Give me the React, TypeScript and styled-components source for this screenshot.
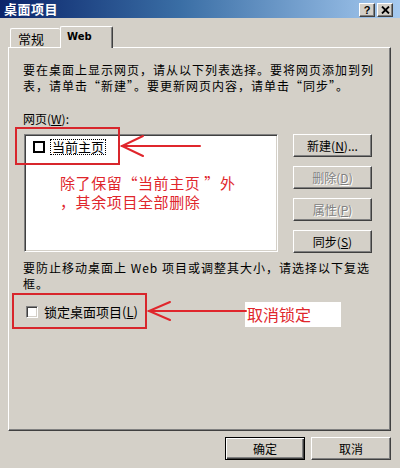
import React from "react";
import styled, { createGlobalStyle, css } from "styled-components";

const GlobalStyle = createGlobalStyle`
  html, body { margin: 0; padding: 0; background: #d4d0c8; }
  body { font-family: "Noto Sans CJK SC", "Liberation Sans", sans-serif; }
  * { box-sizing: border-box; }
`;

const FONT = `"Noto Sans CJK SC", "Liberation Sans", sans-serif`;
const RED = "#e0262c";

const Window = styled.div`
  position: relative;
  width: 400px;
  height: 468px;
  background: #d4d0c8;
  overflow: hidden;
  font-family: ${FONT};
  color: #000;
`;

const TitleBar = styled.div`
  height: 18px;
  display: flex;
  align-items: center;
  justify-content: space-between;
  padding: 0 7px 0 4px;
  background: linear-gradient(to right, #0a246a 0%, #3a6ea5 45%, #a6caf0 100%);
`;

const Title = styled.div`
  color: #fff;
  font-weight: 700;
  font-size: 13px;
  line-height: 14px;
  letter-spacing: 0.5px;
`;

const TitleButtons = styled.div`
  display: flex;
  gap: 2px;
  padding-top: 2px;
`;

const TitleBtn = styled.div`
  width: 16px;
  height: 14px;
  background: #d4d0c8;
  border: 1px solid;
  border-color: #fff #404040 #404040 #fff;
  box-shadow: inset -1px -1px #808080;
  display: flex;
  align-items: center;
  justify-content: center;
  font-family: "Liberation Sans", sans-serif;
  font-weight: 700;
  font-size: 11px;
  line-height: 10px;
`;

const Body = styled.div`
  padding: 8px 9px 0 8px;
  display: flex;
  flex-direction: column;
`;

const TabStrip = styled.div`
  height: 21px;
  display: flex;
  align-items: flex-end;
  padding-left: 2px;
`;

const Tab = styled.div<{ $active?: boolean }>`
  position: relative;
  background: #d4d0c8;
  border: 1px solid;
  border-bottom: none;
  border-color: #fff #404040 #404040 #fff;
  border-radius: 2px 2px 0 0;
  box-shadow: inset -1px 0 #808080;
  display: flex;
  align-items: center;
  font-size: 13px;
  ${(p) =>
    p.$active
      ? css`
          width: 53px;
          height: 22px;
          margin-bottom: -1px;
          z-index: 2;
          padding: 0 0 2px 6px;
          font-family: "DejaVu Sans", sans-serif;
          font-size: 10px;
          font-weight: 700;
        `
      : css`
          width: 50px;
          height: 19px;
          padding-left: 7px;
          border-right: none;
          box-shadow: none;
        `}
`;

const TabPanel = styled.div`
  position: relative;
  z-index: 1;
  height: 384px;
  border: 1px solid;
  border-color: #fff #404040 #404040 #fff;
  box-shadow: inset -1px -1px #808080;
  padding: 14px 0 0 14px;
  display: flex;
  flex-direction: column;
`;

const Para = styled.div<{ $mt?: number }>`
  margin-top: ${(p) => p.$mt ?? 0}px;
  display: flex;
  flex-direction: column;
`;

const Line = styled.div`
  height: 16px;
  font-size: 12px;
  letter-spacing: 1px;
  line-height: 16px;
  white-space: nowrap;
`;

const FieldLabel = styled.div`
  margin-top: 18px;
  font-size: 12px;
  line-height: 14px;
`;

const ListRow = styled.div`
  margin-top: 8px;
  display: flex;
  gap: 15px;
  padding-left: 1px;
`;

const ListBox = styled.div`
  width: 254px;
  height: 118px;
  background: #fff;
  border: 1px solid;
  border-color: #808080 #fff #fff #808080;
  box-shadow: inset 1px 1px #404040, inset -1px -1px #d4d0c8;
  padding: 4px 0 0 8px;
`;

const ListItem = styled.div`
  display: flex;
  align-items: center;
  gap: 5px;
`;

const BoldCheck = styled.div`
  width: 12px;
  height: 12px;
  border: 2px solid #000;
  background: #fff;
`;

const FocusText = styled.div`
  border: 1px dotted #000;
  padding: 0 1px;
  font-size: 13px;
  line-height: 14px;
`;

const ButtonCol = styled.div`
  display: flex;
  flex-direction: column;
  gap: 9px;
`;

const Button = styled.div<{ $disabled?: boolean; $default?: boolean; $w?: number }>`
  width: ${(p) => p.$w ?? 79}px;
  height: 23px;
  border: 1px solid;
  border-color: #fff #404040 #404040 #fff;
  box-shadow: inset -1px -1px #808080;
  background: #d4d0c8;
  display: flex;
  align-items: center;
  justify-content: center;
  font-size: 12px;
  line-height: 14px;
  color: ${(p) => (p.$disabled ? "#808080" : "#000")};
  text-shadow: ${(p) => (p.$disabled ? "1px 1px #fff" : "none")};
  ${(p) =>
    p.$default &&
    css`
      border: 1px solid #000;
      box-shadow: inset 1px 1px #fff, inset -1px -1px #404040, inset -2px -2px #808080;
    `}
`;

const U = styled.span`
  text-decoration: underline;
`;

const CheckRow = styled.div`
  margin-top: 12px;
  display: flex;
  align-items: center;
  gap: 6px;
  padding-left: 3px;
  font-size: 13px;
  line-height: 16px;
`;

const SunkenCheck = styled.div`
  width: 12px;
  height: 12px;
  background: #fff;
  border: 1px solid;
  border-color: #808080 #fff #fff #808080;
  box-shadow: inset 1px 1px #404040, inset -1px -1px #d4d0c8;
`;

const Footer = styled.div`
  margin-top: 6px;
  display: flex;
  justify-content: flex-end;
  gap: 6px;
`;

/* annotation overlay */
const RedBox = styled.div<{ $x: number; $y: number; $w: number; $h: number }>`
  position: absolute;
  left: ${(p) => p.$x}px;
  top: ${(p) => p.$y}px;
  width: ${(p) => p.$w}px;
  height: ${(p) => p.$h}px;
  border: 2px solid #d8262c;
  z-index: 5;
  pointer-events: none;
`;

const Note = styled.div<{ $x: number; $y: number }>`
  position: absolute;
  left: ${(p) => p.$x}px;
  top: ${(p) => p.$y}px;
  color: ${RED};
  font-size: 15px;
  letter-spacing: 0.6px;
  line-height: 18px;
  white-space: nowrap;
  z-index: 5;
`;

const NoteLabel = styled.div`
  position: absolute;
  left: 245px;
  top: 302px;
  width: 96px;
  height: 25px;
  background: #fff;
  color: ${RED};
  font-size: 16px;
  line-height: 25px;
  padding-left: 2px;
  z-index: 5;
`;

const ArrowLayer = styled.svg`
  position: absolute;
  left: 0;
  top: 0;
  z-index: 6;
  pointer-events: none;
`;

export default function App() {
  return (
    <>
      <GlobalStyle />
      <Window>
        <TitleBar>
          <Title>桌面项目</Title>
          <TitleButtons>
            <TitleBtn>?</TitleBtn>
            <TitleBtn>
              <svg width="9" height="8" viewBox="0 0 9 8">
                <path d="M1 0.5 L8 7.5 M8 0.5 L1 7.5" stroke="#000" strokeWidth="1.8" />
              </svg>
            </TitleBtn>
          </TitleButtons>
        </TitleBar>
        <Body>
          <TabStrip>
            <Tab>常规</Tab>
            <Tab $active>Web</Tab>
          </TabStrip>
          <TabPanel>
            <Para>
              <Line>要在桌面上显示网页，请从以下列表选择。要将网页添加到列</Line>
              <Line>表，请单击“新建”。要更新网页内容，请单击“同步”。</Line>
            </Para>
            <FieldLabel>
              网页(<U>W</U>):
            </FieldLabel>
            <ListRow>
              <ListBox>
                <ListItem>
                  <BoldCheck />
                  <FocusText>当前主页</FocusText>
                </ListItem>
              </ListBox>
              <ButtonCol>
                <Button>
                  新建(<U>N</U>)...
                </Button>
                <Button $disabled>
                  删除(<U>D</U>)
                </Button>
                <Button $disabled>
                  属性(<U>P</U>)
                </Button>
                <Button>
                  同步(<U>S</U>)
                </Button>
              </ButtonCol>
            </ListRow>
            <Para $mt={7}>
              <Line>要防止移动桌面上 Web 项目或调整其大小，请选择以下复选</Line>
              <Line>框。</Line>
            </Para>
            <CheckRow>
              <SunkenCheck />
              <span>
                锁定桌面项目(<U>L</U>)
              </span>
            </CheckRow>
          </TabPanel>
          <Footer>
            <Button $default $w={80}>确定</Button>
            <Button $w={80}>取消</Button>
          </Footer>
        </Body>

        <RedBox $x={15} $y={127} $w={105} $h={38} />
        <RedBox $x={12} $y={293} $w={135} $h={36} />
        <Note $x={60} $y={174}>除了保留“当前主页 ”外</Note>
        <Note $x={60} $y={193}>，其余项目全部删除</Note>
        <NoteLabel>取消锁定</NoteLabel>
        <ArrowLayer width="400" height="468" viewBox="0 0 400 468">
          <g stroke="#e0262c" strokeWidth="2" fill="none" strokeLinecap="round">
            <path d="M122 146 L200 146" />
            <path d="M143 136 L122 146 L143 156" />
            <path d="M149 311 L246 311" />
            <path d="M170 302 L149 311 L170 320" />
          </g>
        </ArrowLayer>
      </Window>
    </>
  );
}
